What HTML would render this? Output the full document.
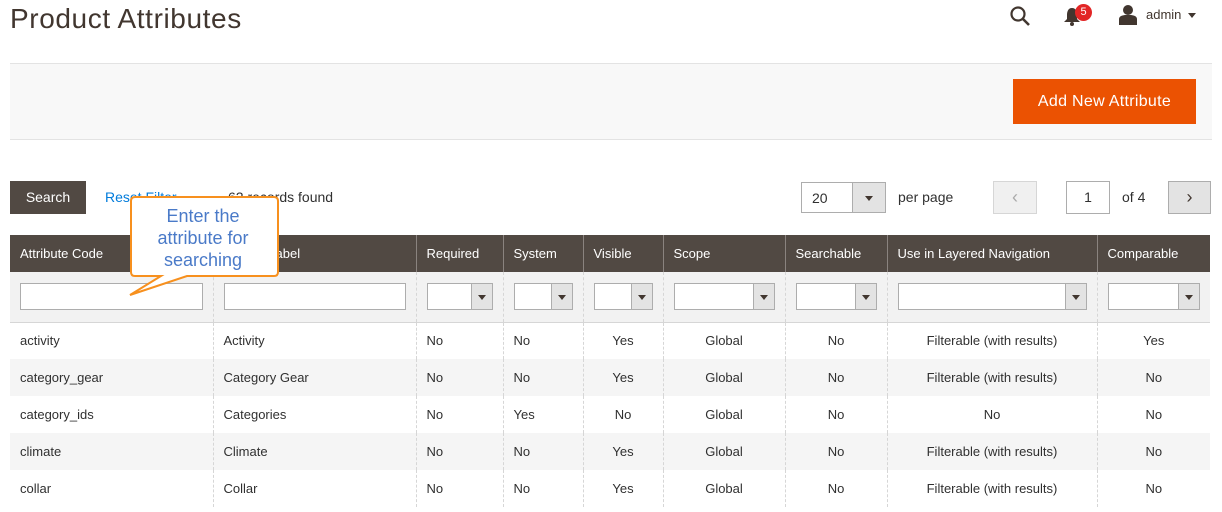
<!DOCTYPE html>
<html><head><meta charset="utf-8"><style>
*{box-sizing:border-box;margin:0;padding:0}
body{width:1222px;height:512px;overflow:hidden;background:#fff;font-family:"Liberation Sans",sans-serif;color:#303030;position:relative}
.a{position:absolute}
h1{position:absolute;left:10px;top:3px;font-size:28px;font-weight:normal;color:#41362f;letter-spacing:0.6px}
.bar{left:10px;top:63px;width:1202px;height:77px;background:#f8f8f8;border-top:1px solid #e3e3e3;border-bottom:1px solid #e3e3e3}
.btn{left:1013px;top:79px;width:183px;height:45px;background:#eb5202;color:#fff;font-size:16px;text-align:center;line-height:45px;letter-spacing:0.3px}
.srch{left:10px;top:181px;width:76px;height:33px;background:#514943;color:#fff;font-size:14px;text-align:center;line-height:33px}
table{position:absolute;left:10px;top:235px;width:1200px;border-collapse:collapse;font-size:13px}
th{background:#514943;color:#fff;font-weight:normal;text-align:left;height:37px;padding:0 10px;border-left:1px solid #8a837f}
th:first-child{border-left:none}
tr.f td{background:#f2f2f2;height:50px;padding:0 10px;border-left:1px dashed #d6d6d6;border-bottom:1px solid #d6d6d6}
tr.f td:first-child{border-left:none}
td{height:37px;padding:0 10px;border-left:1px dashed #d6d6d6}
td:first-child{border-left:none}
tr.s td{background:#f5f5f5}
.in{height:27px;border:1px solid #adadad;background:#fff;width:100%}
.sel{height:27px;border:1px solid #adadad;background:#fff;width:100%;position:relative}
.sel:after{content:"";position:absolute;right:0;top:0;width:20px;height:25px;background:#e3e3e3 ;border-left:1px solid #adadad}
.sel:before{content:"";position:absolute;right:6px;top:11px;border:4px solid transparent;border-top:5px solid #41362f;z-index:2}
.c{text-align:center}
</style></head><body>
<h1>Product Attributes</h1>
<svg class="a" style="left:1009px;top:5px" width="22" height="22" viewBox="0 0 22 22"><circle cx="9" cy="9" r="6.5" fill="none" stroke="#41362f" stroke-width="2.2"/><path d="M13.5 13.5 L20 20" stroke="#41362f" stroke-width="2.6"/></svg>
<svg class="a" style="left:1063px;top:6px" width="18" height="20" viewBox="0 0 18 20"><path d="M9 2 C5 2 4 6 4 9 L4 13 L1 16 L17 16 L14 13 L14 9 C14 6 13 2 9 2Z" fill="#41362f"/><circle cx="9" cy="18" r="2" fill="#41362f"/></svg>
<div class="a" style="left:1075px;top:4px;width:17px;height:17px;border-radius:50%;background:#e22626;color:#fff;font-size:11px;text-align:center;line-height:17px">5</div>
<svg class="a" style="left:1117px;top:4px" width="22" height="21" viewBox="0 0 22 21"><circle cx="11" cy="6" r="5" fill="#41362f"/><path d="M2 21 L2 15 C2 12 6 11 9 11 L13 11 C16 11 20 12 20 15 L20 21Z" fill="#41362f"/></svg>
<div class="a" style="left:1146px;top:7px;font-size:13px;color:#41362f">admin</div>
<div class="a" style="left:1188px;top:13px;border:4px solid transparent;border-top:5px solid #41362f"></div>
<div class="a bar"></div>
<div class="a btn">Add New Attribute</div>
<div class="a srch">Search</div>
<div class="a" style="left:105px;top:189px;font-size:14px;color:#007bdb">Reset Filter</div>
<div class="a" style="left:228px;top:189px;font-size:14px;color:#303030">62 records found</div>
<div class="a" style="left:801px;top:182px;width:85px;height:31px;border:1px solid #adadad;font-size:14px;padding:7px 10px">20</div>
<div class="a" style="left:852px;top:183px;width:33px;height:29px;background:#e3e3e3;border-left:1px solid #adadad"></div>
<div class="a" style="left:865px;top:196px;border:4px solid transparent;border-top:5px solid #41362f"></div>
<div class="a" style="left:898px;top:189px;font-size:14px">per page</div>
<div class="a" style="left:993px;top:181px;width:44px;height:33px;border:1px solid #d6d6d6;background:#f0f0f0;color:#aaa;text-align:center;line-height:31px;font-size:18px">&#8249;</div>
<div class="a" style="left:1066px;top:181px;width:44px;height:33px;border:1px solid #adadad;text-align:center;line-height:31px;font-size:14px">1</div>
<div class="a" style="left:1122px;top:189px;font-size:14px">of 4</div>
<div class="a" style="left:1168px;top:181px;width:43px;height:33px;border:1px solid #adadad;background:#e3e3e3;color:#41362f;text-align:center;line-height:31px;font-size:18px">&#8250;</div>
<table>
<tr><th style="width:203px">Attribute Code</th><th style="width:203px">Default Label</th><th style="width:87px">Required</th><th style="width:80px">System</th><th style="width:80px">Visible</th><th style="width:122px">Scope</th><th style="width:102px">Searchable</th><th style="width:210px">Use in Layered Navigation</th><th>Comparable</th></tr>
<tr class="f"><td><div class="in"></div></td><td><div class="in"></div></td><td><div class="sel"></div></td><td><div class="sel"></div></td><td><div class="sel"></div></td><td><div class="sel"></div></td><td><div class="sel"></div></td><td><div class="sel"></div></td><td><div class="sel"></div></td></tr>
<tr><td>activity</td><td>Activity</td><td>No</td><td>No</td><td class="c">Yes</td><td class="c">Global</td><td class="c">No</td><td class="c">Filterable (with results)</td><td class="c">Yes</td></tr>
<tr class="s"><td>category_gear</td><td>Category Gear</td><td>No</td><td>No</td><td class="c">Yes</td><td class="c">Global</td><td class="c">No</td><td class="c">Filterable (with results)</td><td class="c">No</td></tr>
<tr><td>category_ids</td><td>Categories</td><td>No</td><td>Yes</td><td class="c">No</td><td class="c">Global</td><td class="c">No</td><td class="c">No</td><td class="c">No</td></tr>
<tr class="s"><td>climate</td><td>Climate</td><td>No</td><td>No</td><td class="c">Yes</td><td class="c">Global</td><td class="c">No</td><td class="c">Filterable (with results)</td><td class="c">No</td></tr>
<tr><td>collar</td><td>Collar</td><td>No</td><td>No</td><td class="c">Yes</td><td class="c">Global</td><td class="c">No</td><td class="c">Filterable (with results)</td><td class="c">No</td></tr>
</table>
<svg class="a" style="left:125px;top:194px" width="160" height="105" viewBox="0 0 160 105"><path d="M10 3 H149 Q153 3 153 7 V78 Q153 82 149 82 H62 L5 101 L36 82 H10 Q6 82 6 78 V7 Q6 3 10 3Z" fill="#fff" stroke="#f7901e" stroke-width="2"/></svg>
<div class="a" style="left:133px;top:205px;width:140px;text-align:center;font-size:18px;line-height:22px;color:#4a7ac8">Enter the<br>attribute for<br>searching</div>
</body></html>
